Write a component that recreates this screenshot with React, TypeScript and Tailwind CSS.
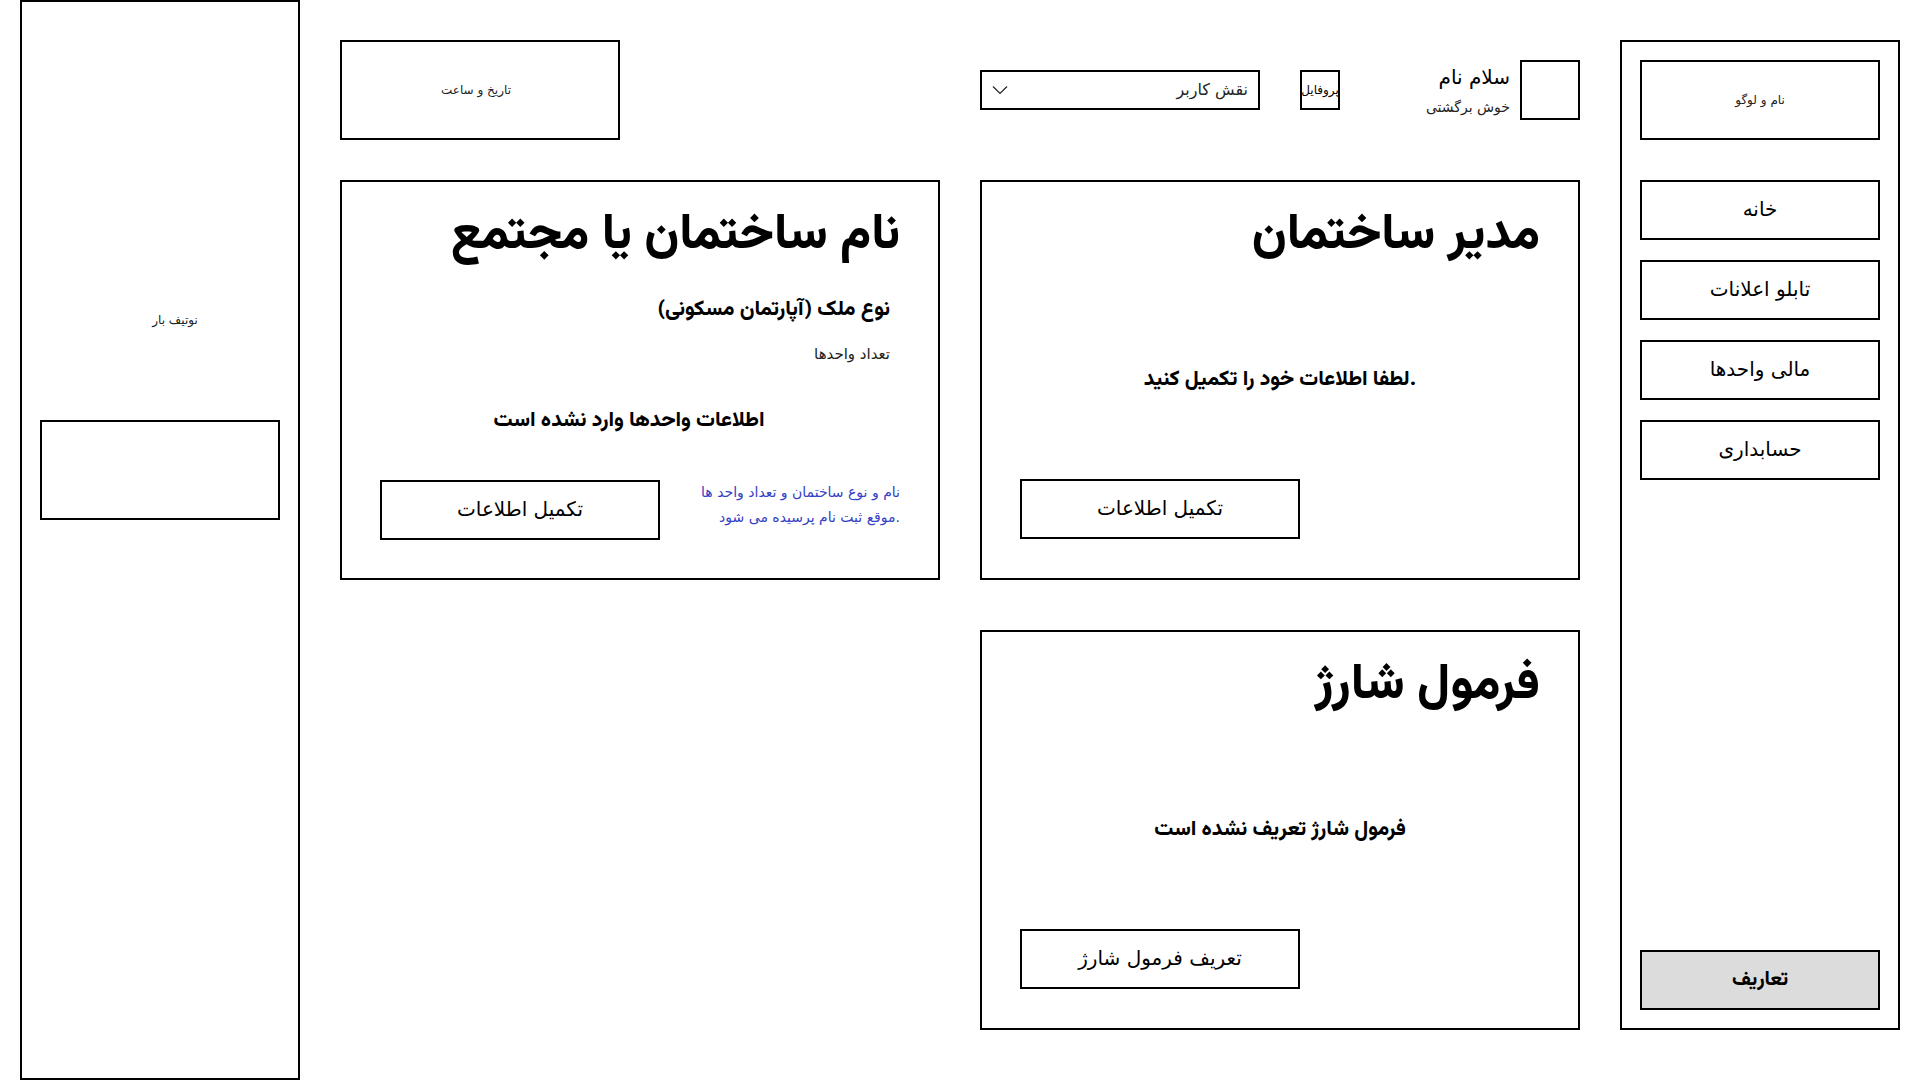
import React from "react";

// regular text is DejaVu Sans, the heavy headings use Vazirmatn
const font = { fontFamily: '"DejaVu Sans", sans-serif' };
const heavy = { fontFamily: "Vazirmatn, sans-serif" };

const navItems = ["خانه", "تابلو اعلانات", "مالی واحدها", "حسابداری"];

const ActionButton = ({ label }: { label: string }) => (
  <button className="w-[280px] h-[60px] border-2 border-black flex items-center justify-center pb-[3px] text-[20px] text-black bg-white">
    <span dir="rtl">{label}</span>
  </button>
);

const CardTitle = ({ children }: { children: React.ReactNode }) => (
  <h2
    dir="rtl"
    className="mt-[25px] text-[50px] leading-[58px] font-extrabold text-black text-right"
    style={heavy}
  >
    {children}
  </h2>
);

const EmptyCard = ({
  title,
  message,
  action,
}: {
  title: string;
  message: string;
  action: string;
}) => (
  <section className="w-[600px] h-[400px] border-2 border-black flex flex-col px-[38px]">
    <CardTitle>{title}</CardTitle>
    <p className="mt-[101px] text-[21px] leading-[28px] font-extrabold text-center" style={heavy}>
      {message}
    </p>
    <div className="mt-[85px] flex">
      <ActionButton label={action} />
    </div>
  </section>
);

export default function App() {
  return (
    <div className="w-[1920px] h-[1080px] bg-white text-black flex overflow-hidden" style={font}>
      {/* notif bar */}
      <aside className="ml-[20px] w-[280px] h-[1080px] border-2 border-black flex flex-col items-center shrink-0">
        <div dir="rtl" className="mt-[308px] pl-[30px] text-[12px] leading-[20px] text-[#222]">
          نوتیف بار
        </div>
        <div className="mt-[90px] w-[240px] h-[100px] border-2 border-black" />
      </aside>

      {/* main */}
      <main className="ml-[40px] w-[1240px] shrink-0 pt-[40px] flex flex-col">
        <header className="h-[100px] flex">
          <div className="w-[280px] h-[100px] border-2 border-black flex items-center justify-center pr-[8px]">
            <span dir="rtl" className="text-[12px] text-[#222]">
              تاریخ و ساعت
            </span>
          </div>
          <div className="ml-[360px] w-[600px] flex items-center">
            <div className="w-[280px] h-[40px] border-2 border-black flex items-center justify-between pl-[10px] pr-[10px]">
              <svg width="16" height="10" viewBox="0 0 16 10" fill="none">
                <path d="M1 1.5 L8 8.5 L15 1.5" stroke="#222" strokeWidth="1.2" />
              </svg>
              <span dir="rtl" className="text-[16px] text-[#222]">
                نقش کاربر
              </span>
            </div>
            <div className="ml-[40px] w-[40px] h-[40px] border-2 border-black flex items-center justify-center overflow-visible">
              <span dir="rtl" className="text-[12px] whitespace-nowrap tracking-[-0.5px]">
                پروفایل
              </span>
            </div>
            <div className="flex-1 flex flex-col items-end mr-[10px]">
              <span dir="rtl" className="text-[20px] leading-[28px]">
                سلام نام
              </span>
              <span dir="rtl" className="mt-[6px] text-[14px] leading-[20px] text-[#222]">
                خوش برگشتی
              </span>
            </div>
            <div className="w-[60px] h-[60px] border-2 border-black" />
          </div>
        </header>

        <div className="mt-[40px] flex gap-[40px]">
          {/* building card */}
          <section className="w-[600px] h-[400px] border-2 border-black flex flex-col px-[38px]">
            <CardTitle>نام ساختمان یا مجتمع</CardTitle>
            <h3
              dir="rtl"
              className="mt-[31px] pr-[10px] text-[21px] leading-[28px] font-extrabold text-right"
              style={heavy}
            >
              نوع ملک (آپارتمان مسکونی)
            </h3>
            <div dir="rtl" className="mt-[20px] pr-[10px] text-[15px] leading-[20px] text-right text-[#222]">
              تعداد واحدها
            </div>
            <p
              dir="rtl"
              className="mt-[43px] pr-[22px] text-[21px] leading-[28px] font-extrabold text-center"
              style={heavy}
            >
              اطلاعات واحدها وارد نشده است
            </p>
            <div className="mt-[45px] flex justify-between items-start">
              <ActionButton label="تکمیل اطلاعات" />
              <p className="text-[14px] leading-[25px] text-[#3340c4] text-right">
                نام و نوع ساختمان و تعداد واحد ها
                <br />
                موقع ثبت نام پرسیده می شود.
              </p>
            </div>
          </section>

          <div className="flex flex-col gap-[50px]">
            <EmptyCard
              title="مدیر ساختمان"
              message="لطفا اطلاعات خود را تکمیل کنید."
              action="تکمیل اطلاعات"
            />
            <EmptyCard
              title="فرمول شارژ"
              message="فرمول شارژ تعریف نشده است"
              action="تعریف فرمول شارژ"
            />
          </div>
        </div>
      </main>

      {/* sidebar */}
      <nav className="ml-[40px] mt-[40px] w-[280px] h-[990px] border-2 border-black shrink-0 flex flex-col px-[18px] pt-[18px] pb-[18px]">
        <div className="h-[80px] border-2 border-black flex items-center justify-center">
          <span dir="rtl" className="text-[12px] text-[#222]">
            نام و لوگو
          </span>
        </div>
        <div className="mt-[40px] flex flex-col gap-[20px]">
          {navItems.map((item) => (
            <a
              key={item}
              className="h-[60px] border-2 border-black flex items-center justify-center pb-[3px] text-[20px]"
            >
              <span dir="rtl">{item}</span>
            </a>
          ))}
        </div>
        <button
          className="mt-auto h-[60px] border-2 border-black bg-[#dcdcdc] flex items-center justify-center text-[20px] font-extrabold"
          style={heavy}
        >
          <span dir="rtl">تعاریف</span>
        </button>
      </nav>
    </div>
  );
}
